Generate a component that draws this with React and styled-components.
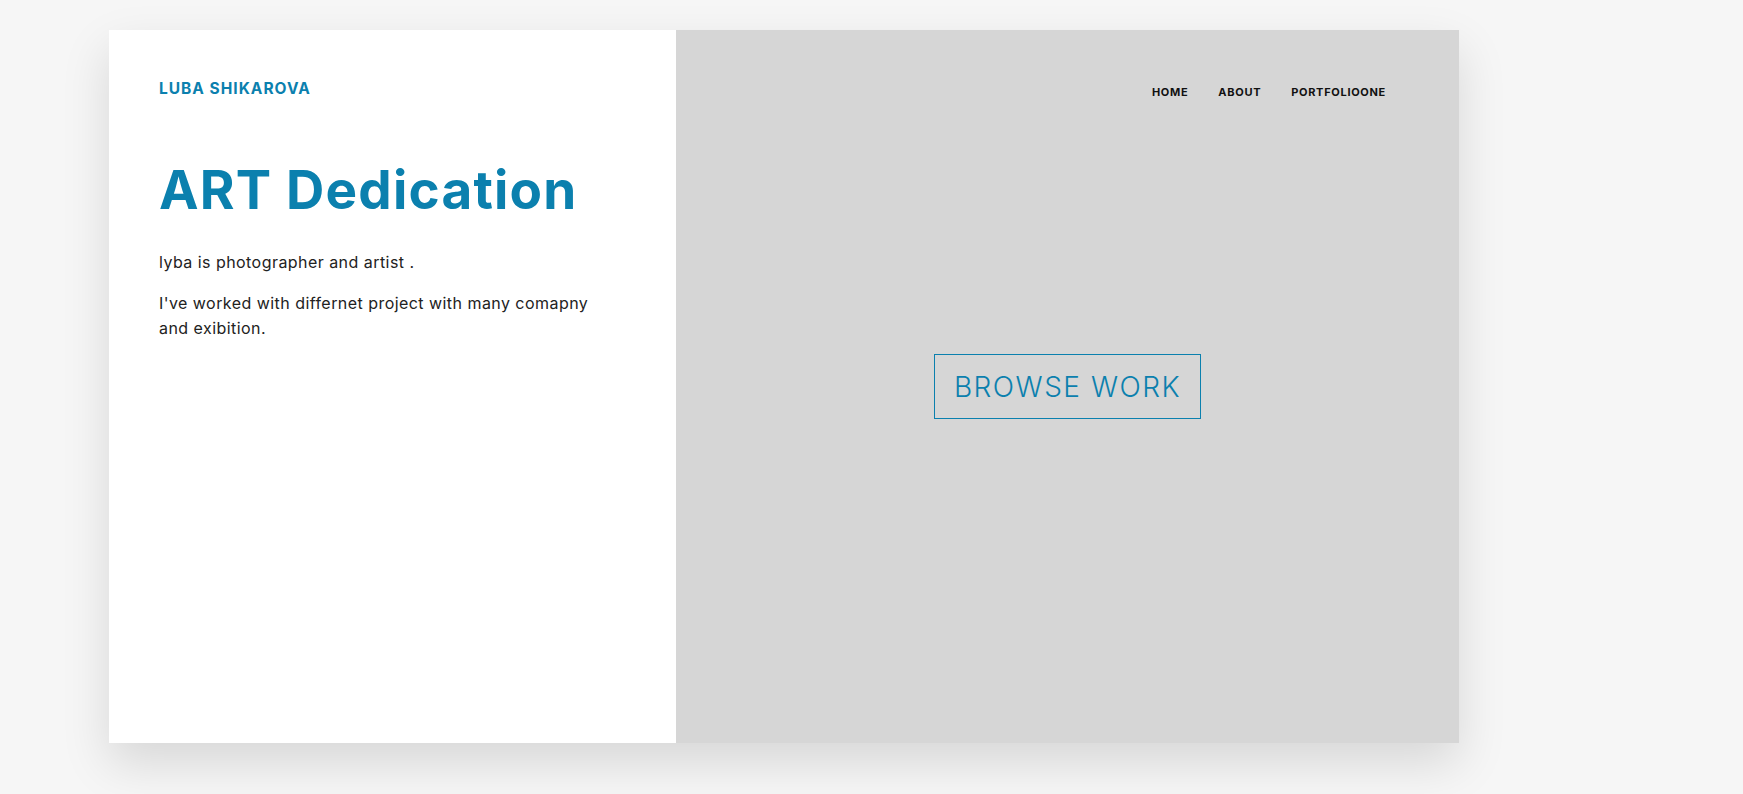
import styled, { createGlobalStyle } from "styled-components"

const GlobalStyle = createGlobalStyle`
    body {
        margin: 0;
        background-color: #F6F6F6;
        font-family: "Inter", "DejaVu Sans", sans-serif;
    }
`

export default function App () {
    return(
        <>
            <GlobalStyle/>
            <Page>
                <Card>
                    <InfoPanel>
                        <Logo>LUBA SHIKAROVA</Logo>
                        <Title>ART Dedication</Title>
                        <Text>lyba is photographer and artist .</Text>
                        <Text>I've worked with differnet project with many comapny and exibition.</Text>
                    </InfoPanel>
                    <ShowPanel>
                        <Nav>
                            <NavLink>HOME</NavLink>
                            <NavLink>ABOUT</NavLink>
                            <NavLink>PORTFOLIOONE</NavLink>
                        </Nav>
                        <BrowseButton>BROWSE WORK</BrowseButton>
                    </ShowPanel>
                </Card>
            </Page>
        </>
    )
}

const Page = styled.div`
    min-height: 794px;
    padding: 30px 0 0 109px;
    box-sizing: border-box;
`
const Card = styled.div`
    width: 1350px;
    height: 713px;
    display: flex;
    box-shadow: 0 20px 45px 0 #00000020;
`
const InfoPanel = styled.div`
    width: 567px;
    background-color: #FFFFFF;
    padding: 0 50px;
    box-sizing: border-box;
`
const Logo = styled.h2`
    margin: 49px 0 0;
    font-size: 15.5px;
    line-height: 20px;
    font-weight: 700;
    color: #0B80AE;
    letter-spacing: 1px;
`
const Title = styled.h1`
    margin: 60px 0 29px;
    font-size: 53px;
    line-height: 62px;
    font-weight: 700;
    color: #0B80AE;
    letter-spacing: 1.2px;
`
const Text = styled.p`
    margin: 0 0 16px;
    width: 460px;
    font-size: 16px;
    line-height: 25px;
    font-weight: 400;
    color: #222222;
    letter-spacing: 0.45px;
`
const ShowPanel = styled.div`
    flex: 1;
    background-color: #D6D6D6;
    display: grid;
    grid-template-areas: "stack";
`
const Nav = styled.nav`
    grid-area: stack;
    align-self: start;
    justify-self: end;
    display: flex;
    column-gap: 30px;
    padding: 55px 73px 0 0;
`
const NavLink = styled.a`
    font-size: 11px;
    line-height: 14px;
    font-weight: 700;
    color: #111111;
    letter-spacing: 0.7px;
    cursor: pointer;
`
const BrowseButton = styled.button`
    grid-area: stack;
    place-self: center;
    width: 267px;
    height: 65px;
    background: transparent;
    border: 1px solid #0B80AE;
    color: #0B80AE;
    font-family: "Inter", "DejaVu Sans", sans-serif;
    font-size: 28px;
    font-weight: 300;
    letter-spacing: 1.5px;
    cursor: pointer;
`
